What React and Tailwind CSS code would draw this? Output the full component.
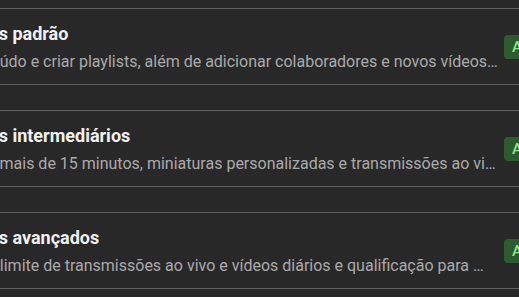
import React from 'react';

const features = [
  {
    title: 'Recursos padrão',
    desc: 'Enviar conteúdo e criar playlists, além de adicionar colaboradores e novos vídeos às playlists',
    shift: 'ml-px',
  },
  {
    title: 'Recursos intermediários',
    desc: 'Vídeos com mais de 15 minutos, miniaturas personalizadas e transmissões ao vivo de alta qualidade',
    shift: '',
  },
  {
    title: 'Recursos avançados',
    desc: 'Aumento do limite de transmissões ao vivo e vídeos diários e qualificação para o Programa de Parcerias do YouTube',
    shift: '-ml-[2px] pr-[8px]',
  },
];

function FeatureRow({ title, desc, shift }) {
  return (
    <div className="flex h-[77px] items-center border-y border-[#626262]">
      <div className="w-[588px] shrink-0 pt-px">
        <h3 className="truncate pl-[21px] text-[18px] leading-[26px] font-bold text-[#f1f1f1]">{title}</h3>
        <p className={`mt-1 truncate text-[16px] leading-[22px] text-[#aaaaaa] ${shift}`}>{desc}</p>
      </div>
      <span className="ml-[5px] shrink-0 rounded-[4px] bg-[#2d5a2e] px-[8px] text-[15.4px] leading-[24px] font-medium text-[#8ee68a]">
        Ativado
      </span>
    </div>
  );
}

export default function App() {
  return (
    <div
      className="h-screen overflow-hidden bg-[#282828]"
      style={{ fontFamily: 'Roboto, "Noto Sans", sans-serif' }}
    >
      <div className="-ml-[89px] w-[700px] pt-2">
        <div className="flex flex-col gap-[25px]">
          {features.map((f) => (
            <FeatureRow key={f.title} {...f} />
          ))}
        </div>
      </div>
    </div>
  );
}
